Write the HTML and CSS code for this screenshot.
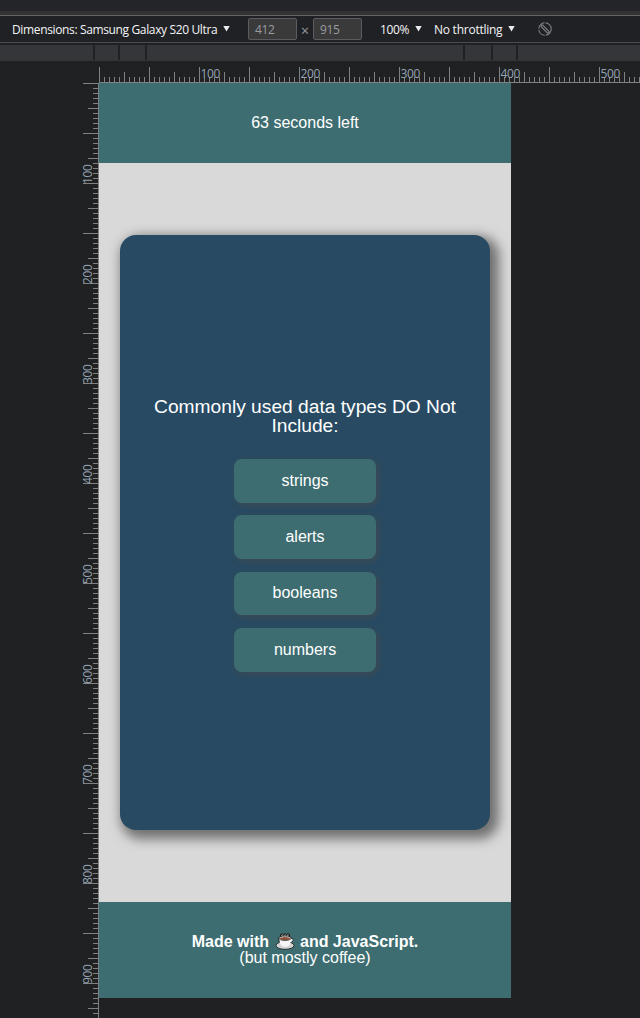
FILE: index.html
```
<!DOCTYPE html>
<html lang="en">
<head>
<meta charset="utf-8">
<title>Quiz device preview</title>
<link rel="stylesheet" href="styles.css">
</head>
<body>
<div class="topstrip"></div>
<div class="toolbar">
  <span class="device">Dimensions: Samsung Galaxy S20 Ultra</span><i class="caret"></i>
  <span class="field width">412</span><span class="times">×</span><span class="field">915</span>
  <span class="zoom">100%</span><i class="caret"></i>
  <span class="throttle">No throttling</span><i class="caret"></i>
  <svg class="rotate" width="14" height="14" viewBox="0 0 14 14" fill="none" stroke="#85868a" stroke-width="1.1"><circle cx="7" cy="7" r="6.2" stroke-dasharray="8.5 1.24"/><path d="M2.6 4.2 9.8 11.4M4.2 2.6 11.4 9.8M2.6 4.2 4.2 2.6M9.8 11.4 11.4 9.8"/></svg>
</div>
<div class="media"><i class="m1"></i><i class="m2"></i><i class="m3"></i><i class="m4"></i><i class="m5"></i><i class="m6"></i></div>
<div class="workspace">
  <svg class="ruler-x" width="541" height="22">
    <defs>
      <pattern id="tx" width="50" height="22" patternUnits="userSpaceOnUse"><path fill="#808183" d="M0 6h1v16H0zM5 16h1v6H5zM10 16h1v6h-1zM15 16h1v6h-1zM20 16h1v6h-1zM25 11h1v11h-1zM30 16h1v6h-1zM35 16h1v6h-1zM40 16h1v6h-1zM45 16h1v6h-1z"/></pattern>
    </defs>
    <rect width="541" height="22" fill="url(#tx)"/>
    <rect y="21" width="541" height="1" fill="#808183"/>
    <g class="label"><text x="101.500" y="17">100</text><text x="201.500" y="17">200</text><text x="301.500" y="17">300</text><text x="401.500" y="17">400</text><text x="501.500" y="17">500</text></g>
  </svg>
  <svg class="ruler-y" width="16" height="935">
    <defs>
      <pattern id="ty" width="16" height="50" patternUnits="userSpaceOnUse"><path fill="#808183" d="M0 0h16v1H0zM10 5h6v1h-6zM10 10h6v1h-6zM10 15h6v1h-6zM10 20h6v1h-6zM5 25h11v1H5zM10 30h6v1h-6zM10 35h6v1h-6zM10 40h6v1h-6zM10 45h6v1h-6z"/></pattern>
    </defs>
    <rect width="16" height="935" fill="url(#ty)"/>
    <rect x="15" width="1" height="935" fill="#808183"/>
    <g class="label"><text transform="translate(9 101) rotate(-90)">100</text><text transform="translate(9 201) rotate(-90)">200</text><text transform="translate(9 301) rotate(-90)">300</text><text transform="translate(9 401) rotate(-90)">400</text><text transform="translate(9 501) rotate(-90)">500</text><text transform="translate(9 601) rotate(-90)">600</text><text transform="translate(9 701) rotate(-90)">700</text><text transform="translate(9 801) rotate(-90)">800</text><text transform="translate(9 901) rotate(-90)">900</text></g>
  </svg>
  <div class="page">
    <header>63 seconds left</header>
    <main>
      <section class="card">
        <h1>Commonly used data types DO Not Include:</h1>
        <div class="answers">
          <button>strings</button>
          <button>alerts</button>
          <button class="short">booleans</button>
          <button>numbers</button>
        </div>
      </section>
    </main>
    <footer>
      <strong>Made with <svg class="coffee" width="20" height="17" viewBox="0 0 20 17"><path d="M5.500 4V1.500L7 .7l1.500.8L10 .7l1.500.8L13 .7l1.500.8V4" fill="#555a5b" stroke="#191919"/><g stroke="#191919" stroke-width=".8"><ellipse cx="10" cy="12.500" rx="9" ry="3.800" fill="#d5d5d5"/><path fill="#f6f6f6" stroke="none" d="M4 5.500h12.500c2.300 0 2.300 3.700-.8 4-1 3-2.700 4.300-5.500 4.300-3.600 0-6-3-6.200-8.300z"/><path fill="none" d="M4.300 9C3.900 8 3.800 6.800 3.800 5.200M15.800 5.200h1c2 .5 1.800 3.900-1.200 4.300"/><ellipse cx="10" cy="5.200" rx="6.200" ry="2.200" fill="#eee"/></g><ellipse cx="10" cy="5.400" rx="5" ry="1.500" fill="#8b5038"/><path d="M7.500 4Q6.200 2.500 7.500 1.500M10.500 4Q9.200 2.500 10.500 1.500M13 4Q12 2.500 13 1.500" fill="none" stroke="#bbb" stroke-width=".7"/></svg> and JavaScript.</strong>
      <span>(but mostly coffee)</span>
    </footer>
  </div>
</div>
</body>
</html>
```

FILE: styles.css
```
* { box-sizing: border-box; }
body { margin: 0; width: 640px; height: 1018px; overflow: hidden; background: #202122; font-family: "Liberation Sans", Arial, sans-serif; color: #fff; }
.topstrip { height: 15px; background: #242529; border-bottom: 4px solid #333334; }
.toolbar { height: 28px; border-top: 1px solid #656567; border-bottom: 1px solid #4b4c50; background: #202124; display: flex; align-items: center; padding-left: 12px; font: 12px/16px "Open Sans", "Noto Sans", sans-serif; color: #f4f5f7; white-space: nowrap; }
.device, .zoom, .throttle { padding-top: 2px; }
.device { width: 206px; letter-spacing: -.36px; }
.caret { width: 7px; height: 6px; margin-left: 5px; margin-top: -1px; background: #e8eaed; clip-path: polygon(0 0, 100% 0, 50% 100%); }
.field { width: 49px; height: 22px; background: #3a3a3b; border: 1px solid #5b5c60; border-radius: 2px; padding: 3px 6px 1px; color: #9a9ba0; letter-spacing: -.3px; }
.width { margin-left: 18px; }
.times { width: 16px; text-align: center; color: #9a9ba0; padding-top: 4px; font-size: 14px; }
.zoom { width: 29px; margin-left: 18px; letter-spacing: -.4px; }
.zoom + .caret { margin-left: 6px; }
.throttle { width: 69px; margin-left: 12px; letter-spacing: -.25px; }
.rotate { margin-left: 23px; margin-top: -1px; }
.media { height: 18px; border-top: 2px solid #202124; background: #35363a; display: flex; }
.media i { height: 15px; width: 2px; background: #202124; }
.m1 { margin-left: 93px; }
.m2 { margin-left: 23px; }
.m3 { margin-left: 25px; }
.m4 { margin-left: 316px; }
.m5 { margin-left: 26px; }
.m6 { margin-left: 23px; }
.workspace { display: grid; grid-template: 22px 935px / 16px 541px; padding-left: 83px; }
.ruler-x { grid-column: 2; display: block; }
.ruler-y { grid-column: 1; display: block; overflow: visible; }
.label { font: 12px "Open Sans", "Noto Sans", sans-serif; letter-spacing: -.4px; fill: #94a3b3; }
.page { width: 412px; height: 915px; background: #d9d9d9; display: flex; flex-direction: column; font-size: 16px; line-height: 16px; text-align: center; }
header { height: 80px; background: #3d6d70; display: flex; align-items: center; justify-content: center; }
main { flex: 1; display: flex; align-items: center; justify-content: center; }
.card { width: 370px; height: 595px; border-radius: 16px; background: #284b63; box-shadow: 5px 5px 12px 4px #707070; display: flex; flex-direction: column; align-items: center; padding: 162px 20px 0; }
h1 { margin: 0; font-size: 19.2px; line-height: 19px; font-weight: 400; }
.answers { display: flex; flex-direction: column; gap: 12px; margin-top: 24px; }
button { width: 142px; height: 44px; border: 0; border-radius: 8px; background: #3d6d70; color: #fff; font: 16px/16px "Liberation Sans", Arial, sans-serif; box-shadow: 2px 2px 6px rgba(72,72,72,.7); padding: 0; }
.short { height: 43px; margin: 1px 0; padding-bottom: 1px; }
footer { height: 96px; background: #3d6d70; display: flex; flex-direction: column; align-items: center; justify-content: center; }
.coffee { vertical-align: -3px; margin: -2px 1px 0; }
footer strong { height: 16px; }
```
